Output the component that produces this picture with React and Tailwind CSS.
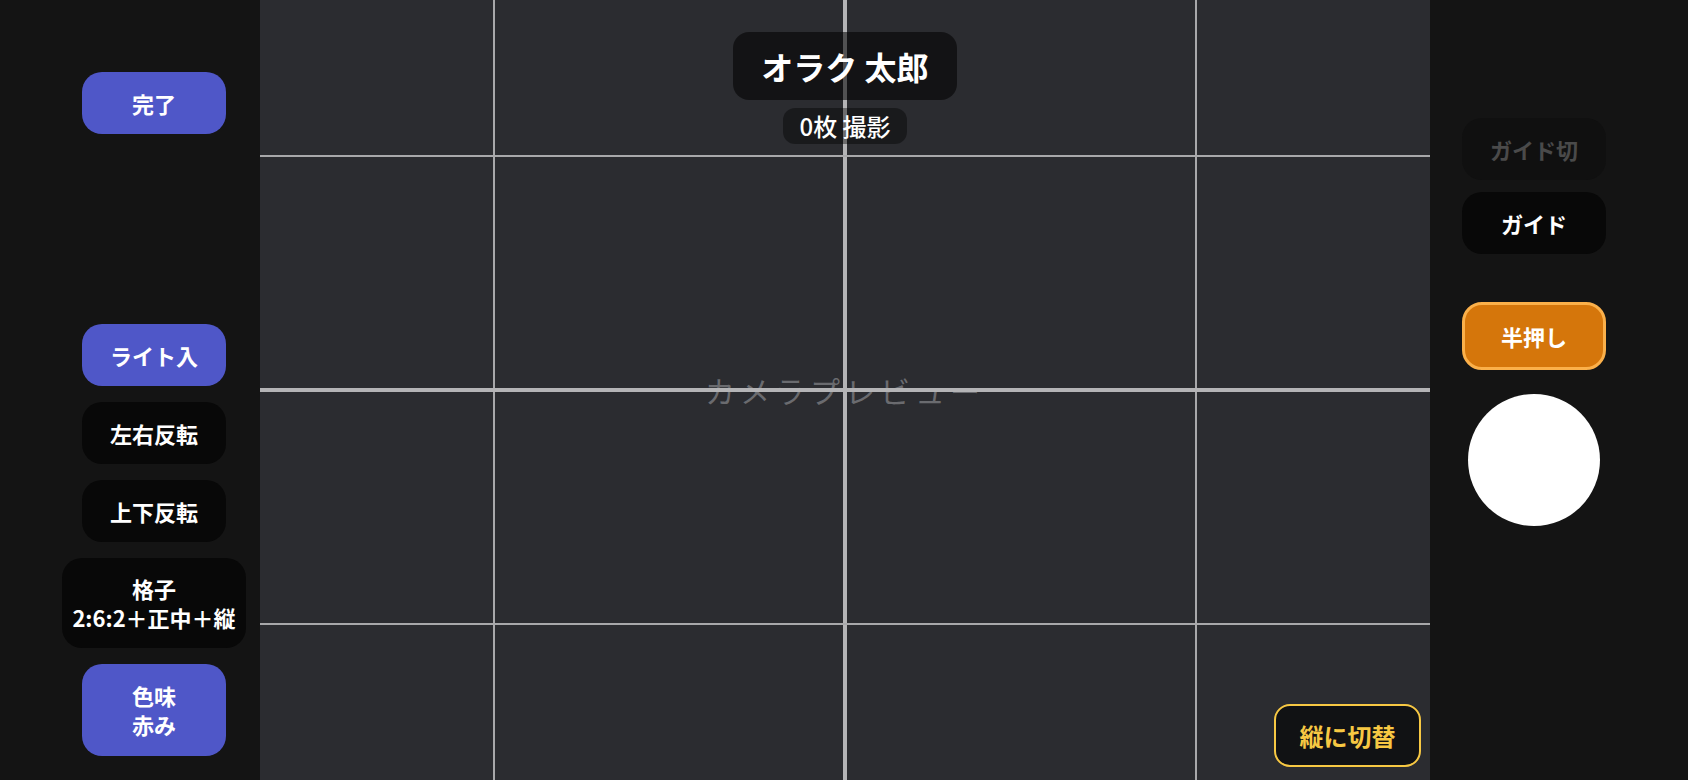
const jp = { fontFamily: '"Noto Sans CJK JP", "Noto Sans", sans-serif' };

function SideButton({ children, tone = "dark", className = "" }) {
  const tones = {
    blue: "bg-[#4f57c8] text-white",
    dark: "bg-[#080808] text-white",
    muted: "bg-[#101010] text-[#4a4a4a]",
  };
  return (
    <button
      className={`flex flex-col items-center justify-center rounded-[20px] font-bold text-[22px] leading-[29px] ${tones[tone]} ${className}`}
    >
      {children}
    </button>
  );
}

function GridLines() {
  return (
    <div className="pointer-events-none absolute inset-0">
      <div className="absolute top-0 bottom-0 left-[20%] w-[2px] -ml-px bg-[#a8a8aa]" />
      <div className="absolute top-0 bottom-0 left-[80%] w-[2px] -ml-px bg-[#a8a8aa]" />
      <div className="absolute top-0 bottom-0 left-1/2 w-[4px] -ml-[2px] bg-[#b4b4b6]" />
      <div className="absolute left-0 right-0 top-[20%] h-[2px] -mt-px bg-[#a8a8aa]" />
      <div className="absolute left-0 right-0 top-[80%] h-[2px] -mt-px bg-[#a8a8aa]" />
      <div className="absolute left-0 right-0 top-1/2 h-[4px] -mt-[2px] bg-[#b4b4b6]" />
    </div>
  );
}

export default function App() {
  return (
    <div className="flex h-[780px] w-[1688px] overflow-hidden bg-[#141414]" style={jp}>
      {/* left controls */}
      <aside className="flex w-[260px] shrink-0 flex-col items-center justify-between pl-[48px] pt-[72px] pb-[24px]">
        <SideButton tone="blue" className="h-[62px] w-[144px]">完了</SideButton>
        <div className="flex flex-col items-center gap-4">
          <SideButton tone="blue" className="h-[62px] w-[144px]">ライト入</SideButton>
          <SideButton className="h-[62px] w-[144px]">左右反転</SideButton>
          <SideButton className="h-[62px] w-[144px]">上下反転</SideButton>
          <SideButton className="h-[90px] w-[184px]">
            <span>格子</span>
            <span>2:6:2＋正中＋縦</span>
          </SideButton>
          <SideButton tone="blue" className="h-[92px] w-[144px]">
            <span>色味</span>
            <span>赤み</span>
          </SideButton>
        </div>
      </aside>

      {/* camera preview */}
      <main className="relative flex flex-1 items-center justify-center bg-[#2b2c30]">
        <span className="text-[30px] tracking-[5px] text-[#6a6b6f]">カメラプレビュー</span>
        <GridLines />
        <div className="absolute left-0 right-0 top-[32px] flex flex-col items-center gap-2">
          <div className="flex h-[68px] w-[224px] items-center justify-center rounded-[16px] bg-black/55 text-[32px] font-bold text-white">
            オラク 太郎
          </div>
          <div className="flex h-[36px] w-[124px] items-center justify-center rounded-[12px] bg-black/40 text-[24px] font-medium text-white">
            0枚 撮影
          </div>
        </div>
        <button className="absolute bottom-[13px] right-[9px] flex h-[63px] w-[147px] items-center justify-center rounded-[16px] border-2 border-[#f7c843] bg-[#111214] text-[24px] font-bold text-[#f7c843]">
          縦に切替
        </button>
      </main>

      {/* right controls */}
      <aside className="flex w-[258px] shrink-0 flex-col items-center pr-[50px] pt-[118px]">
        <SideButton tone="muted" className="h-[62px] w-[144px]">ガイド切</SideButton>
        <SideButton className="mt-3 h-[62px] w-[144px]">ガイド</SideButton>
        <button className="mt-12 flex h-[68px] w-[144px] items-center justify-center rounded-[20px] border-[3px] border-[#fbb04a] bg-[#d5760b] text-[22px] font-bold text-white">
          半押し
        </button>
        <div className="mt-6 h-[132px] w-[132px] rounded-full bg-white" />
      </aside>
    </div>
  );
}
